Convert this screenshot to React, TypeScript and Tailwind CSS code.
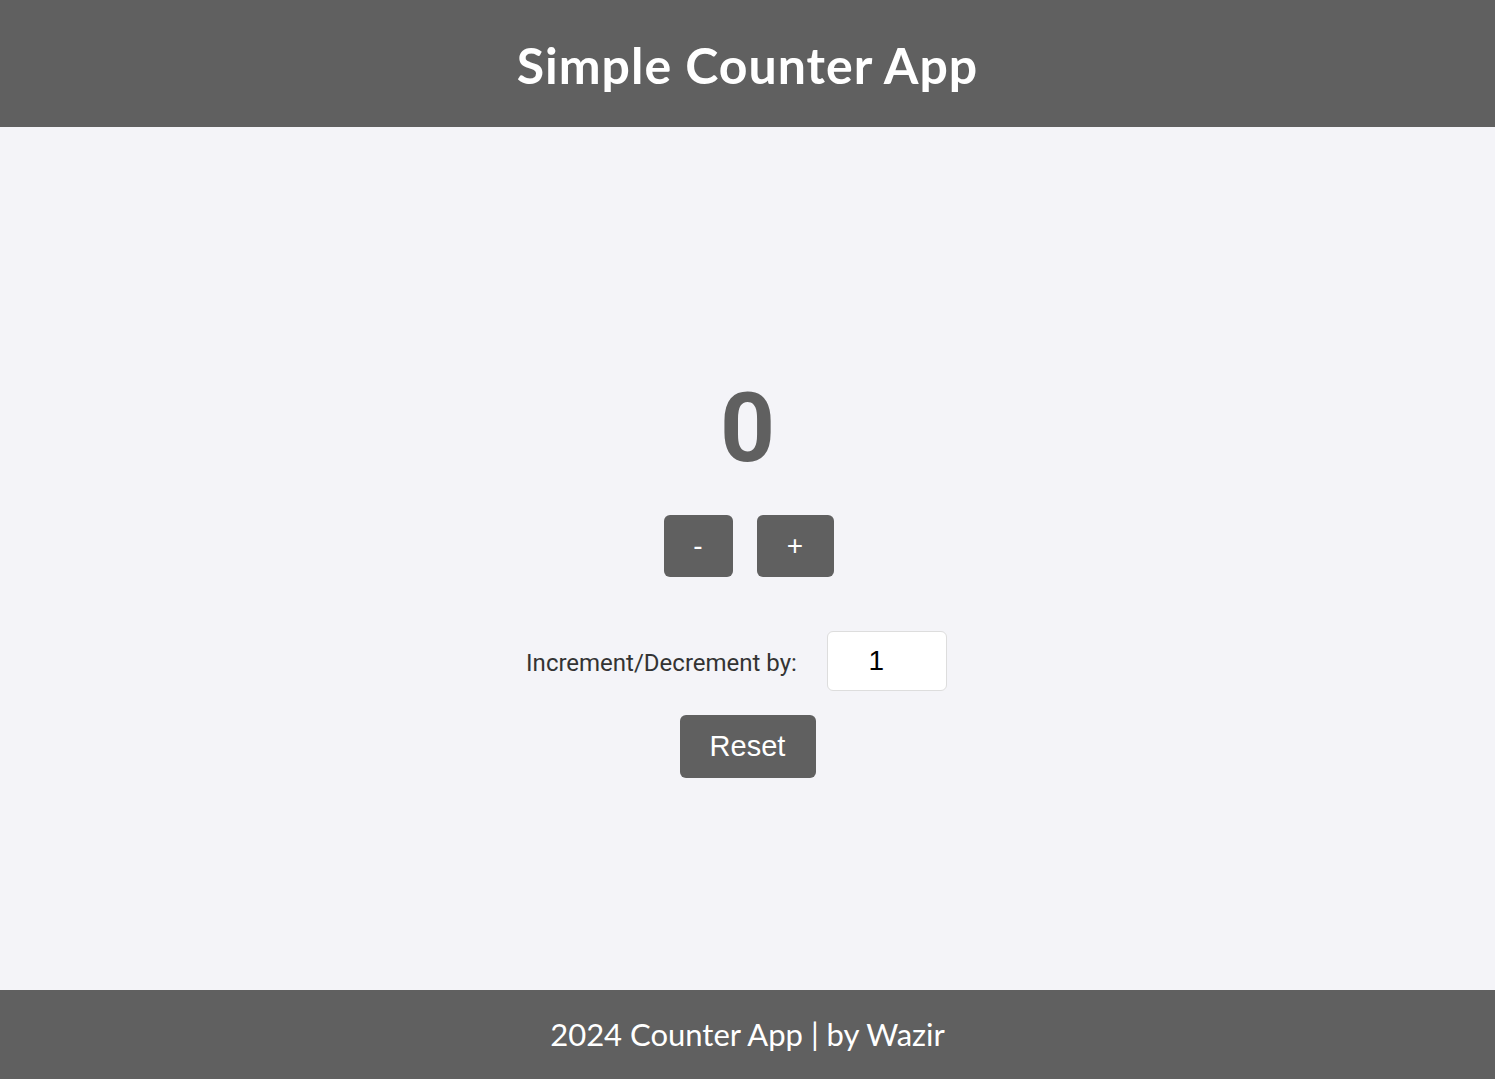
import { useState } from "react";

const comic = { fontFamily: '"Comic Sans MS", "Lato", sans-serif' };

const App = () => {
    const [count, setCount] = useState(0);
    const [step, setStep] = useState(1);

    return (
        <div className="min-h-screen flex flex-col bg-[#f4f4f8]">
            <header className="h-[127px] bg-[#606060] flex items-center justify-center pt-1">
                <h1 style={comic} className="text-[50px] font-bold text-white tracking-[1px]">Simple Counter App</h1>
            </header>

            <main className="h-[863px] flex flex-col items-center pt-[244px] font-['Roboto',sans-serif]">
                <div className="text-[96px] font-bold leading-[1.2] text-[#606060]">{count}</div>
                <div className="flex gap-6 mt-[29px] ml-[2px]">
                    <button
                        onClick={() => setCount(count - step)}
                        className="w-[69px] h-[62px] rounded-[6px] bg-[#606060] text-white text-[28px] font-['Liberation_Sans',sans-serif]"
                    >
                        -
                    </button>
                    <button
                        onClick={() => setCount(count + step)}
                        className="w-[77px] h-[62px] rounded-[6px] bg-[#606060] text-white text-[28px] font-['Liberation_Sans',sans-serif]"
                    >
                        +
                    </button>
                </div>
                <div className="flex items-center mt-[54px] ml-[-22px]">
                    <label className="text-[24px] text-[#333] mt-1">Increment/Decrement by:</label>
                    <input
                        type="number"
                        value={step}
                        onChange={(e) => setStep(Number(e.target.value))}
                        className="ml-[30px] w-[120px] h-[60px] pr-[6px] rounded-[6px] border border-[#ddd] bg-white text-center text-[28px] text-black font-['Liberation_Sans',sans-serif] outline-none"
                    />
                </div>
                <button
                    onClick={() => setCount(0)}
                    className="mt-[24px] w-[136px] h-[63px] rounded-[6px] bg-[#606060] text-white text-[29px] font-['Liberation_Sans',sans-serif]"
                >
                    Reset
                </button>
            </main>

            <footer className="h-[89px] bg-[#606060] flex items-center justify-center">
                <p style={comic} className="text-[31px] text-white">2024 Counter App | by Wazir</p>
            </footer>
        </div>
    );
};

export default App;
